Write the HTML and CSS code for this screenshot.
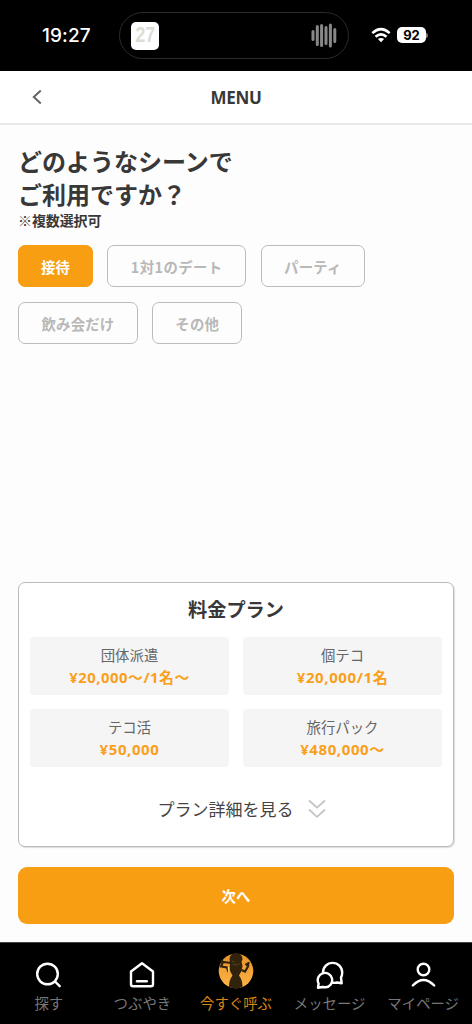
FILE: index.html
```html
<!DOCTYPE html>
<html lang="ja">
<head>
<meta charset="utf-8">
<title>MENU</title>
<link rel="stylesheet" href="styles.css">
</head>
<body>
<div class="app">
  <div class="status">
    <span class="time">19:27</span>
    <div class="island">
      <span class="album"><span class="album-num">27</span></span>
      <svg class="wave" width="26" height="28" viewBox="0 0 26 28" fill="none" stroke="#888" stroke-width="3" stroke-linecap="round"><path d="M2 9.500V17.500M6.300 4.500V22.500M10.600 3.500V23.500M15 5.500V21.500M19.400 3V24M23.800 7.500V19.500"/></svg>
    </div>
    <svg class="wifi" width="20" height="16" viewBox="0 0 20 16" fill="none" stroke="#fff" stroke-width="2.600"><path d="M1.300 6.100Q10-1.700 18.700 6.100M4.500 9.700Q10 4.900 15.500 9.700"/><path d="M6.900 12.100Q10 9.700 13.100 12.100L10 15.200Z" fill="#fff" stroke="none"/></svg>
    <span class="battery">92</span><span class="battery-cap"></span>
  </div>
  <header class="header">
    <svg class="back" width="12" height="16" viewBox="0 0 12 16" fill="none" stroke="#666" stroke-width="2"><path d="M9.800 1.500L2.800 8L9.800 14.500"/></svg>
    <span class="menu">MENU</span>
  </header>
  <main class="main">
    <h1 class="title">どのようなシーンで<br>ご利用ですか？</h1>
    <p class="note">※複数選択可</p>
    <div class="chips">
      <span class="chip selected">接待</span>
      <span class="chip date">1対1のデート</span>
      <span class="chip">パーティ</span>
      <span class="chip">飲み会だけ</span>
      <span class="chip">その他</span>
    </div>
    <section class="plans">
      <h2 class="plans-title">料金プラン</h2>
      <div class="grid">
        <div class="plan"><span>団体派遣</span><b class="price group">¥20,000〜/1名〜</b></div>
        <div class="plan"><span>個テコ</span><b class="price">¥20,000/1名</b></div>
        <div class="plan"><span>テコ活</span><b class="price">¥50,000</b></div>
        <div class="plan"><span>旅行パック</span><b class="price">¥480,000〜</b></div>
      </div>
      <div class="detail"><span>プラン詳細を見る</span>
        <svg width="18" height="20" viewBox="0 0 18 20" fill="none" stroke="#c4c4c4" stroke-width="1.800"><path d="M1 1.500L9 8.600L17 1.500M1 10.500L9 17.800L17 10.500"/></svg>
      </div>
    </section>
    <div class="next">次へ</div>
  </main>
  <nav class="nav">
    <div class="tab">
      <svg width="36" height="36" viewBox="0 0 36 36" fill="none" stroke="#fff" stroke-width="2.400" stroke-linecap="round"><circle cx="16.500" cy="21" r="10.300"/><path d="M24 28.500L28.700 33.200"/></svg>
      <span>探す</span>
    </div>
    <div class="tab">
      <svg width="36" height="36" viewBox="0 0 36 36" fill="none" stroke="#fff" stroke-width="2.400" stroke-linecap="round" stroke-linejoin="round"><path d="M7 18.500L18 10.200L29 18.500V31.200Q29 33.200 27 33.200H9Q7 33.200 7 31.200Z"/><path d="M13 28.200H22.800"/></svg>
      <span>つぶやき</span>
    </div>
    <div class="tab active">
      <svg width="36" height="36" viewBox="0 0 36 36"><defs><linearGradient id="gold" x2="0" y2="1"><stop offset="0" stop-color="#e5942b"/><stop offset="1" stop-color="#ffb347"/></linearGradient></defs><circle cx="18" cy="18" r="17.300" fill="url(#gold)"/><g fill="#30220b"><path d="M11.500 6Q12 .3 18 .3Q24 .3 24.500 6L23.500 9L24.500 13L23.500 18L21 22.500Q24.500 27 24.500 34Q18 36.800 11 34Q11 27 14.500 22.500L11.500 17L12 10Z"/></g><path d="M13 10L5 9L3 13.500L9 14.500L10.500 19M3 9.500L4.500 7M23.500 17L27 18.500L30 13.500L30.500 9M30 13L27.500 10.500" fill="none" stroke="#30220b" stroke-width="2.200"/><path d="M9.700 14H11.200L11.800 19H10.200Z" fill="#ffd75c"/><path d="M14.500 11L19 12L22 10.500M14 8L17 9" fill="none" stroke="#705228" stroke-width=".6"/></svg>
      <span>今すぐ呼ぶ</span>
    </div>
    <div class="tab">
      <svg width="36" height="36" viewBox="0 0 36 36" fill="none" stroke="#fff" stroke-width="2.400" stroke-linejoin="round"><path d="M11 20.500V19.500A9.600 9.600 0 0 1 30.200 19.500Q30.200 22.500 29 24.500L29.700 30.200L25 29.500Q22.500 30.200 20 29.500"/><path d="M6 34.800L6.600 30.500A7.200 7.200 0 1 1 13.500 34.300L10.500 34Z"/></svg>
      <span>メッセージ</span>
    </div>
    <div class="tab">
      <svg width="36" height="36" viewBox="0 0 36 36" fill="none" stroke="#fff" stroke-width="2.400" stroke-linecap="round"><circle cx="18.500" cy="16.500" r="5.800"/><path d="M7.800 32.500Q18.500 21.500 29.200 32.500"/></svg>
      <span>マイページ</span>
    </div>
  </nav>
</div>
</body>
</html>
```
FILE: styles.css
```css
* { box-sizing: border-box; }
body { margin: 0; background: #fdfdfd; color: #383838; font-family: "Noto Sans CJK JP", sans-serif; }
.app { width: 472px; height: 1024px; display: flex; flex-direction: column; overflow: hidden; }
.status { height: 71px; flex: none; background: #000; display: flex; align-items: center; font-family: Inter, sans-serif; color: #fff; }
.time { width: 119px; padding-left: 42px; font-size: 19px; font-weight: 500; line-height: 24px; letter-spacing: 0.1px; }
.island { width: 230px; height: 47px; border: 1.500px solid #2b2b2b; border-radius: 24px; display: flex; align-items: center; justify-content: space-between; padding: 0 11px; }
.album { width: 28px; height: 28px; background: #fff; border-radius: 5px; color: #dcddd6; font: bold 22px/26px "Liberation Sans", sans-serif; display: flex; justify-content: center; }
.album-num { transform: scaleX(0.8); }
.wifi { margin-left: 22px; margin-top: -2px; }
.battery { width: 29px; height: 16px; margin-left: 6px; margin-top: -1px; border-radius: 5px; background: #fff; color: #000; font-size: 13px; font-weight: 700; line-height: 16px; text-align: center; }
.battery-cap { width: 2px; height: 5px; background: #777; border-radius: 0 2px 2px 0; }
.header { height: 54px; flex: none; background: #fff; border-bottom: 2px solid #e9e9e9; display: grid; grid-template-columns: 1fr auto 1fr; align-items: center; }
.back { margin-left: 31px; }
.menu { font: bold 17px/24px "Noto Sans", sans-serif; letter-spacing: -0.3px; padding-top: 1px; }
.main { flex: 1; padding: 19px 18px 18px; display: flex; flex-direction: column; }
.title { margin: 0; font-size: 24px; line-height: 33px; font-weight: 700; }
.note { margin: 0; font-size: 14px; line-height: 20px; font-weight: 700; letter-spacing: -0.1px; }
.chips { display: flex; flex-wrap: wrap; gap: 15px 14.400px; margin-top: 15px; }
.chip { height: 42px; padding: 0 22px; border: 1.200px solid #bbb; border-radius: 7px; font-size: 14.400px; font-weight: 700; line-height: 41px; color: #b8b8b8; text-align: center; white-space: nowrap; letter-spacing: 0.200px; }
.chip:nth-child(3), .chip:nth-child(4) { padding: 0 22.500px; }
.chip.selected { color: #fff; background: #f79e12; border-color: #f79e12; letter-spacing: 0; }
.chip.date { width: 139px; padding: 0; letter-spacing: 0.400px; }
.plans { height: 265px; margin-top: auto; border: 1px solid #bbb; border-radius: 7px; box-shadow: 1px 1px 1px #ddd; background: #fff; padding: 12px 11px 0; }
.plans-title { margin: 0; text-align: center; font-size: 19.200px; line-height: 28px; }
.grid { display: grid; grid-template-columns: 1fr 1fr; gap: 14px; margin-top: 14px; }
.plan { height: 58px; background: #f5f5f5; border-radius: 4px; display: flex; flex-direction: column; align-items: center; padding-top: 7px; font-size: 14.400px; line-height: 22px; color: #666; white-space: nowrap; }
.price { color: #f99f1b; font-family: "Noto Sans", "Noto Sans CJK JP", sans-serif; font-size: 15px; line-height: 22px; letter-spacing: 0.600px; }
.price.group { font-size: 14.800px; letter-spacing: 0.550px; }
.detail { display: flex; align-items: center; justify-content: center; gap: 14px; margin-top: 29px; padding-left: 11px; font-size: 17px; line-height: 26px; color: #444; }
.next { height: 57px; flex: none; margin-top: 20px; background: #f79e12; border-radius: 9px; color: #fff; font-size: 14.400px; line-height: 57px; font-weight: 700; text-align: center; }
.nav { height: 82px; flex: none; background: #000; border-top: 1px solid #444; padding: 10px 2px 0; display: grid; grid-template-columns: repeat(5, 1fr); }
.tab { display: flex; flex-direction: column; align-items: center; color: #777; font-size: 14.400px; line-height: 22px; white-space: nowrap; }
.tab svg { flex: none; margin-bottom: 3px; }
.tab.active { color: #d98514; }
```
